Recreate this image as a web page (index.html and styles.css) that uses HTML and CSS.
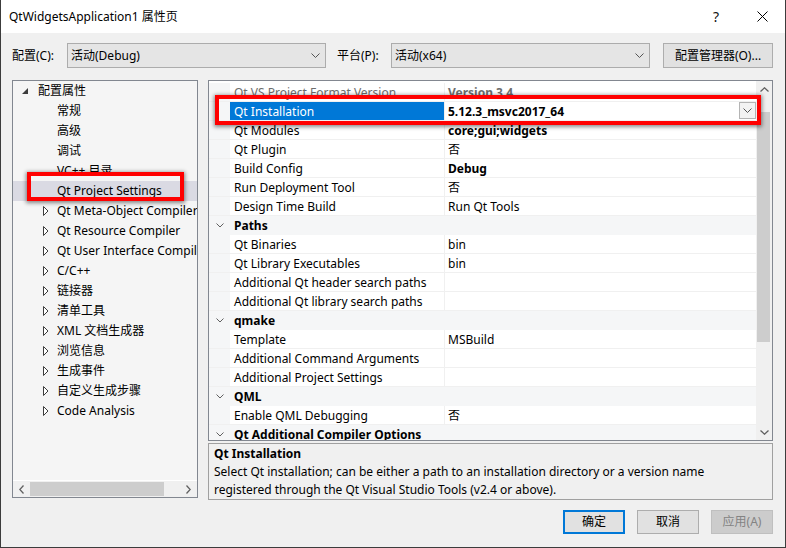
FILE: index.html
```html
<!DOCTYPE html>
<html lang="zh-CN">
<head>
<meta charset="utf-8">
<title>QtWidgetsApplication1 属性页</title>
<link rel="stylesheet" href="styles.css">
</head>
<body>
<div class="window">
  <header class="titlebar">
    <span class="title">QtWidgetsApplication1 属性页</span>
    <span class="cap-btn help">?</span>
    <span class="cap-btn close"><svg width="11" height="11" viewBox="0 0 11 11"><path d="M0.5 0.5L10.5 10.5M10.5 0.5L0.5 10.5" stroke="#000" stroke-width="1" fill="none"/></svg></span>
  </header>
  <main class="main">
    <div class="config-row">
      <span class="lbl lbl-config">配置(C):</span>
      <div class="combo"><span class="combo-text">活动(Debug)</span><svg class="chev" width="9" height="5" viewBox="0 0 9 5"><path d="M0.5 0.5L4.5 4.5L8.5 0.5" stroke="#555" fill="none"/></svg></div>
      <span class="lbl lbl-platform">平台(P):</span>
      <div class="combo"><span class="combo-text">活动(x64)</span><svg class="chev" width="9" height="5" viewBox="0 0 9 5"><path d="M0.5 0.5L4.5 4.5L8.5 0.5" stroke="#555" fill="none"/></svg></div>
      <button class="btn btn-mgr">配置管理器(O)...</button>
    </div>

    <div class="panels">
      <div class="tree">
        <div class="tree-list">
          <div class="trow lv0"><span class="tog"><svg width="6" height="6" viewBox="0 0 6 6"><polygon points="6,0 6,6 0,6" fill="#3c3c3c"/></svg></span><span>配置属性</span></div>
          <div class="trow lv1"><span class="tog"></span><span>常规</span></div>
          <div class="trow lv1"><span class="tog"></span><span>高级</span></div>
          <div class="trow lv1"><span class="tog"></span><span>调试</span></div>
          <div class="trow lv1"><span class="tog"></span><span>VC++ 目录</span></div>
          <div class="trow lv1 tsel"><span class="tog"></span><span>Qt Project Settings</span></div>
          <div class="trow lv1"><span class="tog"><svg class="tri" width="6" height="10" viewBox="0 0 6 10"><path d="M0.5 0.5L5 5L0.5 9.5Z" stroke="#3c3c3c" fill="#fff"/></svg></span><span>Qt Meta-Object Compiler</span></div>
          <div class="trow lv1"><span class="tog"><svg class="tri" width="6" height="10" viewBox="0 0 6 10"><path d="M0.5 0.5L5 5L0.5 9.5Z" stroke="#3c3c3c" fill="#fff"/></svg></span><span>Qt Resource Compiler</span></div>
          <div class="trow lv1"><span class="tog"><svg class="tri" width="6" height="10" viewBox="0 0 6 10"><path d="M0.5 0.5L5 5L0.5 9.5Z" stroke="#3c3c3c" fill="#fff"/></svg></span><span>Qt User Interface Compiler</span></div>
          <div class="trow lv1"><span class="tog"><svg class="tri" width="6" height="10" viewBox="0 0 6 10"><path d="M0.5 0.5L5 5L0.5 9.5Z" stroke="#3c3c3c" fill="#fff"/></svg></span><span>C/C++</span></div>
          <div class="trow lv1"><span class="tog"><svg class="tri" width="6" height="10" viewBox="0 0 6 10"><path d="M0.5 0.5L5 5L0.5 9.5Z" stroke="#3c3c3c" fill="#fff"/></svg></span><span>链接器</span></div>
          <div class="trow lv1"><span class="tog"><svg class="tri" width="6" height="10" viewBox="0 0 6 10"><path d="M0.5 0.5L5 5L0.5 9.5Z" stroke="#3c3c3c" fill="#fff"/></svg></span><span>清单工具</span></div>
          <div class="trow lv1"><span class="tog"><svg class="tri" width="6" height="10" viewBox="0 0 6 10"><path d="M0.5 0.5L5 5L0.5 9.5Z" stroke="#3c3c3c" fill="#fff"/></svg></span><span>XML 文档生成器</span></div>
          <div class="trow lv1"><span class="tog"><svg class="tri" width="6" height="10" viewBox="0 0 6 10"><path d="M0.5 0.5L5 5L0.5 9.5Z" stroke="#3c3c3c" fill="#fff"/></svg></span><span>浏览信息</span></div>
          <div class="trow lv1"><span class="tog"><svg class="tri" width="6" height="10" viewBox="0 0 6 10"><path d="M0.5 0.5L5 5L0.5 9.5Z" stroke="#3c3c3c" fill="#fff"/></svg></span><span>生成事件</span></div>
          <div class="trow lv1"><span class="tog"><svg class="tri" width="6" height="10" viewBox="0 0 6 10"><path d="M0.5 0.5L5 5L0.5 9.5Z" stroke="#3c3c3c" fill="#fff"/></svg></span><span>自定义生成步骤</span></div>
          <div class="trow lv1"><span class="tog"><svg class="tri" width="6" height="10" viewBox="0 0 6 10"><path d="M0.5 0.5L5 5L0.5 9.5Z" stroke="#3c3c3c" fill="#fff"/></svg></span><span>Code Analysis</span></div>
        </div>
        <div class="hscroll">
          <span class="sarrow"><svg width="5" height="9" viewBox="0 0 5 9"><path d="M4.5 0.5L0.8 4.5L4.5 8.5" stroke="#606060" stroke-width="1.3" fill="none"/></svg></span>
          <div class="htrack"><div class="hthumb"></div></div>
          <span class="sarrow"><svg width="5" height="9" viewBox="0 0 5 9"><path d="M0.5 0.5L4.2 4.5L0.5 8.5" stroke="#606060" stroke-width="1.3" fill="none"/></svg></span>
        </div>
      </div>

      <div class="right">
        <div class="grid">
          <div class="grid-body">
            <div class="prow readonly"><div class="pm"></div><div class="pn">Qt VS Project Format Version</div><div class="pv b">Version 3.4</div></div>
            <div class="prow sel"><div class="pm"></div><div class="pn">Qt Installation</div><div class="pv b"><span class="pv-text">5.12.3_msvc2017_64</span><span class="dd"><svg width="9" height="5" viewBox="0 0 9 5"><path d="M0.5 0.5L4.5 4.5L8.5 0.5" stroke="#555" fill="none"/></svg></span></div></div>
            <div class="prow"><div class="pm"></div><div class="pn">Qt Modules</div><div class="pv b">core;gui;widgets</div></div>
            <div class="prow"><div class="pm"></div><div class="pn">Qt Plugin</div><div class="pv">否</div></div>
            <div class="prow"><div class="pm"></div><div class="pn">Build Config</div><div class="pv b">Debug</div></div>
            <div class="prow"><div class="pm"></div><div class="pn">Run Deployment Tool</div><div class="pv">否</div></div>
            <div class="prow"><div class="pm"></div><div class="pn">Design Time Build</div><div class="pv">Run Qt Tools</div></div>
            <div class="pcat"><div class="pm"><svg width="8" height="5" viewBox="0 0 8 5"><path d="M0.5 0.5L4 4L7.5 0.5" stroke="#606060" fill="none"/></svg></div><div class="pc">Paths</div></div>
            <div class="prow"><div class="pm"></div><div class="pn">Qt Binaries</div><div class="pv">bin</div></div>
            <div class="prow"><div class="pm"></div><div class="pn">Qt Library Executables</div><div class="pv">bin</div></div>
            <div class="prow"><div class="pm"></div><div class="pn">Additional Qt header search paths</div><div class="pv"></div></div>
            <div class="prow"><div class="pm"></div><div class="pn">Additional Qt library search paths</div><div class="pv"></div></div>
            <div class="pcat"><div class="pm"><svg width="8" height="5" viewBox="0 0 8 5"><path d="M0.5 0.5L4 4L7.5 0.5" stroke="#606060" fill="none"/></svg></div><div class="pc">qmake</div></div>
            <div class="prow"><div class="pm"></div><div class="pn">Template</div><div class="pv">MSBuild</div></div>
            <div class="prow"><div class="pm"></div><div class="pn">Additional Command Arguments</div><div class="pv"></div></div>
            <div class="prow"><div class="pm"></div><div class="pn">Additional Project Settings</div><div class="pv"></div></div>
            <div class="pcat"><div class="pm"><svg width="8" height="5" viewBox="0 0 8 5"><path d="M0.5 0.5L4 4L7.5 0.5" stroke="#606060" fill="none"/></svg></div><div class="pc">QML</div></div>
            <div class="prow"><div class="pm"></div><div class="pn">Enable QML Debugging</div><div class="pv">否</div></div>
            <div class="pcat"><div class="pm"><svg width="8" height="5" viewBox="0 0 8 5"><path d="M0.5 0.5L4 4L7.5 0.5" stroke="#606060" fill="none"/></svg></div><div class="pc">Qt Additional Compiler Options</div></div>
          </div>
          <div class="vscroll">
            <span class="varrow"><svg width="9" height="5" viewBox="0 0 9 5"><path d="M0.5 4.5L4.5 0.8L8.5 4.5" stroke="#606060" stroke-width="1.3" fill="none"/></svg></span>
            <div class="vtrack"><div class="vthumb"></div></div>
            <span class="varrow"><svg width="9" height="5" viewBox="0 0 9 5"><path d="M0.5 0.5L4.5 4.2L8.5 0.5" stroke="#606060" stroke-width="1.3" fill="none"/></svg></span>
          </div>
        </div>
        <div class="desc">
          <div class="desc-title">Qt Installation</div>
          <div class="desc-line">Select Qt installation; can be either a path to an installation directory or a version name</div>
          <div class="desc-line">registered through the Qt Visual Studio Tools (v2.4 or above).</div>
        </div>
      </div>
    </div>

    <div class="buttons">
      <button class="btn btn-dlg btn-default">确定</button>
      <button class="btn btn-dlg">取消</button>
      <button class="btn btn-dlg btn-disabled">应用(A)</button>
    </div>
  </main>

  <div class="annot annot-tree"></div>
  <div class="annot annot-grid"></div>
</div>
</body>
</html>
```

FILE: styles.css
```css
* { box-sizing: border-box; }
html, body { margin: 0; padding: 0; }
body {
  width: 786px;
  height: 548px;
  overflow: hidden;
  background: #f0f0f0;
  font-family: "Noto Sans", "Noto Sans CJK SC", sans-serif;
  font-size: 12px;
  line-height: 16px;
  color: #000;
}
.window {
  position: relative;
  width: 786px;
  height: 548px;
  border: 1px solid #3c3c3c;
  border-top: none;
  background: #f0f0f0;
  display: flex;
  flex-direction: column;
}
.titlebar {
  height: 33px;
  flex-shrink: 0;
  background: #fff;
  display: flex;
  align-items: center;
}
.title { flex: 1; padding-left: 8px; white-space: nowrap; }
.cap-btn {
  width: 46px;
  height: 33px;
  display: flex;
  align-items: center;
  justify-content: center;
}
.help { font-size: 14px; color: #111; }

.main { padding: 0 12px 0 11px; }

.config-row {
  display: flex;
  align-items: center;
  height: 25px;
  margin-top: 10px;
}
.lbl { white-space: nowrap; }
.lbl-config { width: 55px; }
.lbl-platform { width: 65px; padding-left: 11px; }
.combo {
  width: 259px;
  height: 25px;
  border: 1px solid #acacac;
  background: #e5e5e5;
  display: flex;
  align-items: center;
  padding-left: 3px;
}
.combo-text { flex: 1; }
.combo .chev { margin-right: 5px; }

.btn {
  font-family: inherit;
  font-size: 12px;
  line-height: 16px;
  color: #000;
  background: #e1e1e1;
  border: 1px solid #adadad;
  padding: 0;
  margin: 0;
}
.btn-mgr { margin-left: 13px; width: 110px; height: 25px; }

.panels {
  display: flex;
  align-items: flex-start;
  gap: 10px;
  margin-top: 12px;
  height: 420px;
}

/* tree */
.tree {
  width: 186px;
  height: 418px;
  border: 1px solid #828790;
  background: #f5f5f5;
  display: flex;
  flex-direction: column;
}
.tree-list { flex: 1; overflow: hidden; }
.trow {
  height: 20px;
  display: flex;
  align-items: center;
  white-space: nowrap;
}
.trow.lv0 { padding-left: 9px; }
.trow.lv1 { padding-left: 29px; }
.tog {
  width: 15px;
  height: 20px;
  flex-shrink: 0;
  display: flex;
  align-items: center;
}
.trow.lv0 .tog { width: 16px; }
.tog .tri { margin-left: 1px; }
.tsel { background: #dadae3; }

.hscroll {
  height: 17px;
  flex-shrink: 0;
  display: flex;
  align-items: center;
  background: #f0f0f0;
  border-top: 1px solid #fff;
}
.sarrow {
  width: 17px;
  height: 16px;
  display: flex;
  align-items: center;
  justify-content: center;
}
.htrack { flex: 1; height: 16px; display: flex; align-items: stretch; }
.hthumb { width: 134px; background: #cdcdcd; margin: 1px 0; }

/* right column */
.right {
  width: 565px;
  height: 420px;
  display: flex;
  flex-direction: column;
}
.grid {
  height: 361px;
  border: 1px solid #828790;
  background: #fff;
  display: flex;
}
.grid-body {
  flex: 1;
  overflow: hidden;
  padding-top: 2px;
}
.prow, .pcat {
  height: 19px;
  display: flex;
  border-bottom: 1px solid #f0f0f0;
  line-height: 17px;
  white-space: nowrap;
}
.pm {
  width: 21px;
  flex-shrink: 0;
  background: #f5f6f7;
  display: flex;
  align-items: center;
  justify-content: center;
}
.pn {
  width: 214px;
  flex-shrink: 0;
  padding: 1px 0 0 4px;
  overflow: hidden;
}
.pv {
  flex: 1;
  border-left: 1px solid #f0f0f0;
  padding: 1px 0 0 3px;
  display: flex;
  overflow: hidden;
}
.pv-text { flex: 1; }
.b { font-weight: bold; }
.readonly { color: #6d6d6d; }
.sel .pn { background: #0078d7; color: #fff; }
.dd {
  width: 17px;
  height: 17px;
  margin-top: -1px;
  border: 1px solid #b4b4b4;
  background: #f3f3f3;
  display: flex;
  align-items: center;
  justify-content: center;
}
.pcat { background: #f5f6f7; border-bottom-color: #f5f6f7; }
.pc { padding: 1px 0 0 4px; font-weight: bold; }

.vscroll {
  width: 16px;
  flex-shrink: 0;
  background: #f0f0f0;
  display: flex;
  flex-direction: column;
}
.varrow {
  height: 16px;
  display: flex;
  align-items: center;
  justify-content: center;
}
.vtrack { flex: 1; padding-top: 15px; }
.vthumb { height: 230px; background: #cdcdcd; margin: 0 2px 0 1px; }

.desc {
  margin-top: 2px;
  height: 57px;
  border: 1px solid #a0a0a0;
  background: #f0f0f0;
  padding: 1px 5px 0;
  line-height: 18px;
  white-space: nowrap;
}
.desc-title { font-weight: bold; }

.buttons {
  display: flex;
  justify-content: flex-end;
  gap: 12px;
  margin-top: 10px;
}
.btn-dlg { width: 62px; height: 24px; }
.btn-default { border: 2px solid #0078d7; }
.btn-disabled { background: #cccccc; border-color: #bfbfbf; color: #838383; }

/* red annotation frames drawn over the screenshot */
.annot {
  position: absolute;
  border: 4px solid #ff0000;
  box-shadow: 0 1px 4px 1px rgba(0, 0, 0, 0.45);
}
.annot-tree { left: 26px; top: 172px; width: 157px; height: 29px; }
.annot-grid { left: 214px; top: 95px; width: 546px; height: 30px; }
```
